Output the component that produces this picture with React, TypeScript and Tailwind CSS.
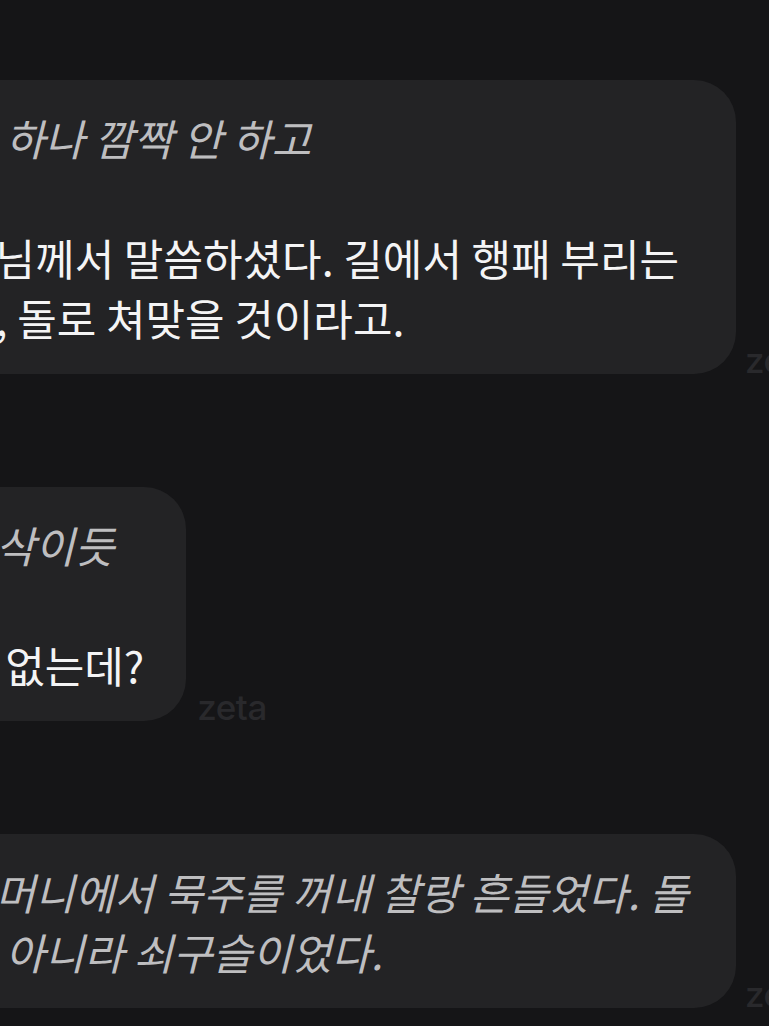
import React from "react";

const KR = "font-['Noto_Sans_CJK_KR','Noto_Sans',sans-serif]";

function Zeta() {
  return (
    <div className="shrink-0 font-['Inter',sans-serif] text-[35px] font-medium leading-none tracking-[-0.5px] text-[#29292c] mb-[-4px]">
      zeta
    </div>
  );
}

function Line({ children, italic }: { children: React.ReactNode; italic?: boolean }) {
  return (
    <div
      className={
        "whitespace-nowrap h-[60px] leading-[60px] " +
        (italic ? "italic text-[#bebec0]" : "text-[#f4f4f5]")
      }
    >
      {children}
    </div>
  );
}

function Bubble({ children, className = "" }: { children: React.ReactNode; className?: string }) {
  return (
    <div
      className={
        "shrink-0 rounded-[42px] bg-[#232325] pl-[40px] py-[27px] text-[43px] " + KR + " " + className
      }
    >
      {children}
    </div>
  );
}

export default function App() {
  return (
    <div className="w-[769px] h-[1026px] overflow-hidden bg-[#151517]">
      <div className="-ml-[84px] pt-[80px] flex flex-col gap-[113px]">
        <div className="flex items-end gap-[9px]">
          <Bubble className="w-[820px] pr-[38px]">
            <Line italic>눈 하나 깜짝 안 하고</Line>
            <div className="h-[60px]" />
            <Line>스님께서 말씀하셨다. 길에서 행패 부리는</Line>
            <Line>면, 돌로 쳐맞을 것이라고.</Line>
          </Bubble>
          <Zeta />
        </div>
        <div className="flex items-end gap-[11px]">
          <Bubble className="w-fit pr-[42px]">
            <Line italic>속삭이듯</Line>
            <div className="h-[60px]" />
            <Line>수 없는데?</Line>
          </Bubble>
          <Zeta />
        </div>
        <div className="flex items-end gap-[9px]">
          <Bubble className="w-[820px] pr-[38px]">
            <Line italic>주머니에서 묵주를 꺼내 찰랑 흔들었다. 돌</Line>
            <Line italic>이 아니라 쇠구슬이었다.</Line>
          </Bubble>
          <Zeta />
        </div>
      </div>
    </div>
  );
}
